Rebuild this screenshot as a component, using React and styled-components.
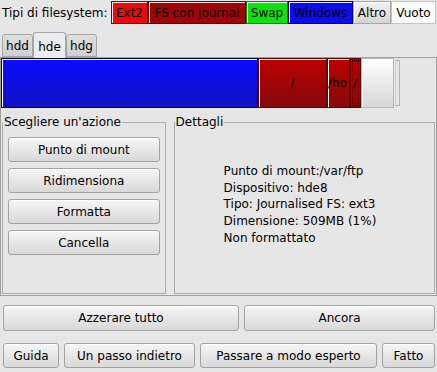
import React from 'react'
import styled, { createGlobalStyle } from 'styled-components'

const Global = createGlobalStyle`
body{
  margin:0;
  background:#e6e6e6;
  font-family:"DejaVu Sans", sans-serif;
  font-size:12px;
  color:#000;
}
`

const Window = styled.div`
width:437px;
height:372px;
display:flex;
flex-direction:column;
background:#e6e6e6;
overflow:hidden;
`

const TypeBar = styled.div`
display:flex;
align-items:center;
height:25px;
`
const TypeLabel = styled.span`
padding-left:2px;
width:109px;
white-space:nowrap;
`
const Swatch = styled.div`
box-sizing:border-box;
width:${p => p.$w}px;
height:23px;
display:flex;
align-items:center;
justify-content:center;
white-space:nowrap;
border:1px solid ${p => p.$border};
background:${p => p.$bg};
box-shadow:inset 1px 1px 0 rgba(255,255,255,0.9);
`

const TabStrip = styled.div`
display:flex;
align-items:flex-end;
height:32px;
padding-left:2px;
position:relative;
z-index:1;
`
const Tab = styled.div`
box-sizing:border-box;
width:${p => p.$w}px;
height:${p => (p.$active ? 26 : 23)}px;
margin-bottom:${p => (p.$active ? -1 : 0)}px;
display:flex;
align-items:center;
justify-content:center;
border:1px solid #a4a4a4;
border-bottom:${p => (p.$active ? 'none' : '1px solid #a4a4a4')};
border-radius:3px 3px 0 0;
background:${p => (p.$active ? '#ececec' : 'linear-gradient(#dedede, #d0d0d0)')};
padding-top:${p => (p.$active ? 2 : 0)}px;
`

const Pane = styled.div`
box-sizing:border-box;
height:239px;
border:1px solid #a0a0a0;
display:flex;
flex-direction:column;
`

const PartBar = styled.div`
display:flex;
height:50px;
align-items:stretch;
`
const Part = styled.div`
box-sizing:border-box;
width:${p => p.$w}px;
flex:none;
display:flex;
align-items:center;
justify-content:${p => p.$align || 'center'};
overflow:hidden;
white-space:nowrap;
border:1px solid ${p => p.$border};
background:${p => p.$bg};
box-shadow:${p => (p.$flat ? 'none' : 'inset 1px 1px 0 #fff')};
`
const FocusMark = styled.div`
flex:1;
align-self:stretch;
margin:1px;
border:1px dotted #000;
display:flex;
align-items:center;
overflow:hidden;
`
const ScrollStub = styled.div`
width:3px;
margin:2px 0 2px 1px;
border:1px solid #b4b4b4;
border-left-color:#d0d0d0;
`

const Panels = styled.div`
display:flex;
gap:8px;
padding:7px 1px 0 1px;
`
const Frame = styled.fieldset`
box-sizing:border-box;
margin:0;
padding:0;
width:${p => p.$w}px;
height:179px;
border:1px solid #adadad;
min-width:0;
`
const Legend = styled.legend`
padding:0 1px;
margin-left:0;
line-height:14px;
`
const ActionList = styled.div`
display:flex;
flex-direction:column;
gap:6px;
padding:8px 5px 0 5px;
`
const Button = styled.button`
box-sizing:border-box;
height:${p => p.$h || 25}px;
width:${p => (p.$w ? p.$w + 'px' : 'auto')};
flex:none;
margin:0;
padding:0;
font-family:"DejaVu Sans", sans-serif;
font-size:12px;
font-weight:400;
color:#000;
border:1px solid #a2a2a2;
border-radius:3px;
background:linear-gradient(#f6f6f6, #d8d8d8);
box-shadow:inset 0 1px 0 #fff;
white-space:nowrap;
`
const Details = styled.div`
padding:34px 0 0 49px;
line-height:16.7px;
`

const BottomRow = styled.div`
display:flex;
gap:${p => p.$gap}px;
padding-left:3px;
margin-top:${p => p.$top}px;
`
const Label = styled.span`
display:block;
`

const swatches = [
    { t: 'Ext2', w: 37, bg: '#e70d0d', border: '#7a0000' },
    { t: 'FS con journal', w: 98, bg: '#a10404', border: '#600000' },
    { t: 'Swap', w: 42, bg: '#0ce20c', border: '#088a08' },
    { t: 'Windows', w: 65, bg: '#0c0cec', border: '#000070' },
    { t: 'Altro', w: 38, bg: 'linear-gradient(#f2f2f2, #d4d4d4)', border: '#a6a6a6' },
    { t: 'Vuoto', w: 45, bg: '#fbfbfb', border: '#c4c4c4' },
]

const red = 'linear-gradient(#bb0000, #850a0a)'

const App = () => {
    return (
        <Window>
            <Global />
            <TypeBar>
                <TypeLabel>Tipi di filesystem:</TypeLabel>
                {swatches.map(s => (
                    <Swatch key={s.t} $w={s.w} $bg={s.bg} $border={s.border}>{s.t}</Swatch>
                ))}
            </TypeBar>
            <TabStrip>
                <Tab $w={31}>hdd</Tab>
                <Tab $w={33} $active>hde</Tab>
                <Tab $w={31}>hdg</Tab>
            </TabStrip>
            <Pane>
                <PartBar>
                    <Part $w={257} $bg="linear-gradient(#0b0bff, #1212c4)" $border="#00006e" />
                    <Part $w={69} $bg={red} $border="#6a0000">/</Part>
                    <Part $w={23} $bg={red} $border="#6a0000" $align="flex-start">/ho</Part>
                    <Part $w={11} $bg={red} $border="#6a0000" $flat>
                        <FocusMark>/h</FocusMark>
                    </Part>
                    <Part $w={33} $bg="linear-gradient(#ffffff, #d6d6d6)" $border="#b8b8b8" />
                    <ScrollStub />
                </PartBar>
                <Panels>
                    <Frame $w={164}>
                        <Legend>Scegliere un'azione</Legend>
                        <ActionList>
                            <Button>Punto di mount</Button>
                            <Button>Ridimensiona</Button>
                            <Button>Formatta</Button>
                            <Button>Cancella</Button>
                        </ActionList>
                    </Frame>
                    <Frame $w={262}>
                        <Legend>Dettagli</Legend>
                        <Details>
                            <Label>Punto di mount:/var/ftp</Label>
                            <Label>Dispositivo: hde8</Label>
                            <Label>Tipo: Journalised FS: ext3</Label>
                            <Label>Dimensione: 509MB (1%)</Label>
                            <Label>Non formattato</Label>
                        </Details>
                    </Frame>
                </Panels>
            </Pane>
            <BottomRow $gap={5} $top={9}>
                <Button $w={236} $h={26}>Azzerare tutto</Button>
                <Button $w={191} $h={26}>Ancora</Button>
            </BottomRow>
            <BottomRow $gap={5} $top={12}>
                <Button $w={56}>Guida</Button>
                <Button $w={131}>Un passo indietro</Button>
                <Button $w={177}>Passare a modo esperto</Button>
                <Button $w={53}>Fatto</Button>
            </BottomRow>
        </Window>
    )
}

export default App
